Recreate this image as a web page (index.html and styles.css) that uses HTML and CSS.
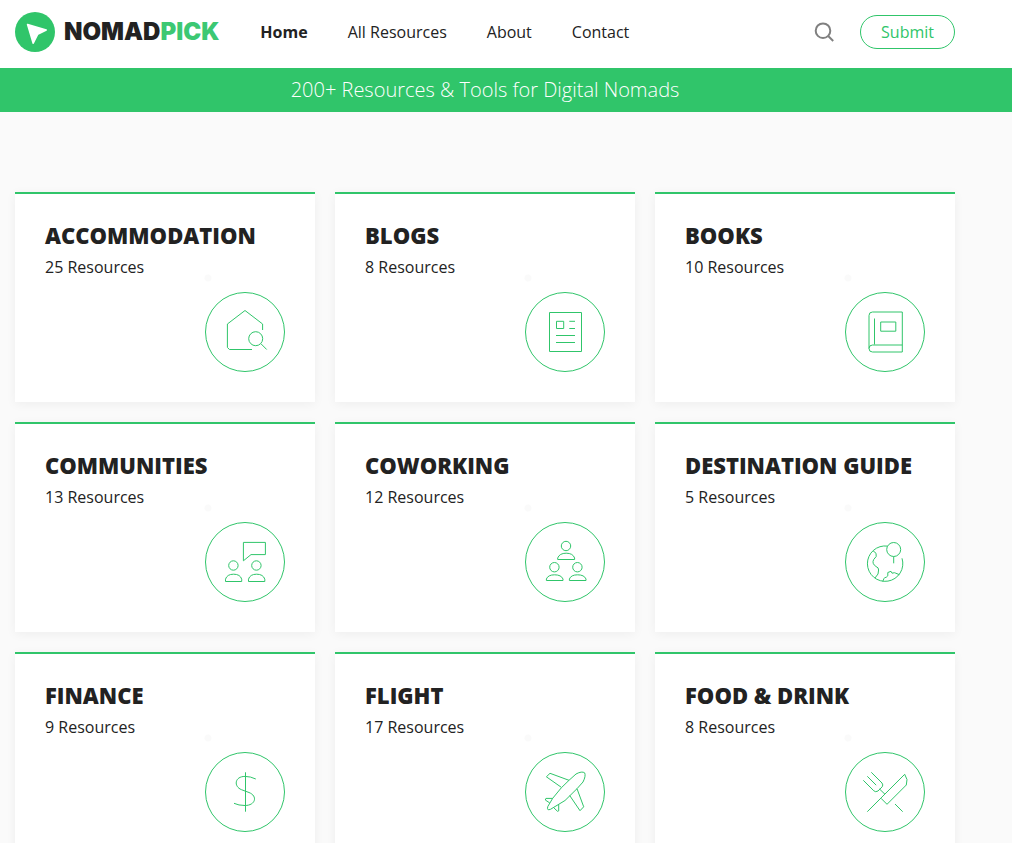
FILE: index.html
```html
<!DOCTYPE html>
<html lang="en">
<head>
<meta charset="utf-8">
<meta name="viewport" content="width=device-width, initial-scale=1">
<title>NomadPick</title>
<link rel="stylesheet" href="styles.css">
</head>
<body>
<header class="header">
  <div class="container header-row">
    <a class="logo" href="#">
      <svg class="logo-mark" viewBox="0 0 40 40" aria-hidden="true"><circle cx="20" cy="20" r="20" fill="#30c56a"/><path d="M12.6 12.6 31.2 18 22.6 22.4 18.2 31.2Z" fill="#fff" stroke="#fff" stroke-width="1.6" stroke-linejoin="round"/></svg>
      <span class="logo-text">NOMAD<span class="logo-accent">PICK</span></span>
    </a>
    <nav class="nav">
      <a class="nav-link nav-active" href="#">Home</a>
      <a class="nav-link" href="#">All Resources</a>
      <a class="nav-link" href="#">About</a>
      <a class="nav-link" href="#">Contact</a>
    </nav>
    <button class="search" type="button" aria-label="Search">
      <svg class="search-icon" viewBox="0 0 20 20" aria-hidden="true"><circle cx="9" cy="8.7" r="7.3"/><path d="M14.2 14l5 5"/></svg>
    </button>
    <a class="submit" href="#">Submit</a>
  </div>
</header>
<div class="banner"><h1 class="container banner-text">200+ Resources &amp; Tools for Digital Nomads</h1></div>
<main class="container cards">
  <a class="card" href="#">
    <h2 class="card-title">ACCOMMODATION</h2><p class="card-count">25 Resources</p>
    <svg class="icon" viewBox="0 0 80 80" aria-hidden="true"><circle cx="40" cy="40" r="39.5"/><path d="M47 57.5H24.5L22.4 55.5V32L40 18.5 57.6 32V38M56 51.8l5.7 5.7"/><circle cx="50.7" cy="46.7" r="7"/></svg>
  </a>
  <a class="card" href="#">
    <h2 class="card-title">BLOGS</h2><p class="card-count">8 Resources</p>
    <svg class="icon" viewBox="0 0 80 80" aria-hidden="true"><circle cx="40" cy="40" r="39.5"/><path d="M24.5 20.5h32v39h-32zM31.5 29.3h7.2v7.2h-7.2zM44.3 29.3H50M44.3 36.5H50M31 43.5H50M31 50.5H50"/></svg>
  </a>
  <a class="card" href="#">
    <h2 class="card-title">BOOKS</h2><p class="card-count">10 Resources</p>
    <svg class="icon" viewBox="0 0 80 80" aria-hidden="true"><circle cx="40" cy="40" r="39.5"/><path d="M24 56.5V23.5Q24 20 27.5 20H57.3V60H27.5Q24 60 24 56.5 24 53 27.5 53H57.3M29.5 26.5V52.5M35.7 30H50.8V39.2H35.7z"/></svg>
  </a>
  <a class="card" href="#">
    <h2 class="card-title">COMMUNITIES</h2><p class="card-count">13 Resources</p>
    <svg class="icon" viewBox="0 0 80 80" aria-hidden="true"><circle cx="40" cy="40" r="39.5"/><path d="M38.4 20.4H60.4V32.6H46L38.4 38.8zM20.5 59.5V57.2Q22 52.2 28.6 52.2T36.7 57.2V59.5zM43.5 59.5V57.2Q45 52.2 51.6 52.2T59.8 57.2V59.5z"/><circle cx="28.4" cy="43.5" r="4.7"/><circle cx="51.4" cy="43.5" r="4.7"/></svg>
  </a>
  <a class="card" href="#">
    <h2 class="card-title">COWORKING</h2><p class="card-count">12 Resources</p>
    <svg class="icon" viewBox="0 0 80 80" aria-hidden="true"><circle cx="40" cy="40" r="39.5"/><path d="M32.7 37.5V36Q34.5 31.2 41.2 31.2T49.6 36V37.5zM21.4 58.5V57Q23 52.8 29.6 52.8T38 57V58.5zM44.4 58.5V57Q46 52.8 52.6 52.8T61 57V58.5z"/><circle cx="41" cy="24" r="4.7"/><circle cx="29.4" cy="45.2" r="4.7"/><circle cx="52.4" cy="45.2" r="4.7"/></svg>
  </a>
  <a class="card" href="#">
    <h2 class="card-title">DESTINATION GUIDE</h2><p class="card-count">5 Resources</p>
    <svg class="icon" viewBox="0 0 80 80" aria-hidden="true"><circle cx="40" cy="40" r="39.5"/><path d="M42.5 24.1A17.7 17.7 0 1 0 57 36.3M48.7 34.5V41.3M28 28.7Q32.5 31 31.2 34.5L28.7 37.5Q26.5 41.5 31 44.5 33.8 45.5 33.6 48L33 52 30 56M37.7 59.5L39 56.5Q39.2 55.5 41.2 55.3L42.8 53.8V50.5L46 49.3 47 51.2Q50 50.2 50.8 51.2L54.4 52.7"/><circle cx="48.7" cy="27.5" r="7"/></svg>
  </a>
  <a class="card" href="#">
    <h2 class="card-title">FINANCE</h2><p class="card-count">9 Resources</p>
    <svg class="icon" viewBox="0 0 80 80" aria-hidden="true"><circle cx="40" cy="40" r="39.5"/><path d="M40.5 20.3V59.7M50.8 27Q45.5 24.4 40 24.4C29.5 24.4 28.5 34.5 36.5 37.7L44 40.5C53 44 50.5 53.5 40 53.5Q33.5 53.5 29 51.3"/></svg>
  </a>
  <a class="card" href="#">
    <h2 class="card-title">FLIGHT</h2><p class="card-count">17 Resources</p>
    <svg class="icon" viewBox="0 0 80 80" aria-hidden="true"><circle cx="40" cy="40" r="39.5"/><path d="M44 28.3L51 22Q57 18.8 59.7 20.9 61 24 58 30L52 36.7 40 48.5 25.5 57.3Q21.5 59 22.8 54.5L27.7 46.3 36.3 35.8zM44 28.3L25 21.3 21.4 24.8 36.3 35.3M52 36.7L58.7 54.8 55 58.7 44.7 43.5M27.7 46.4H20.9L20.3 48 24.7 50.9M33.7 52.3V58.9L32.5 59.3 28.5 55.5"/></svg>
  </a>
  <a class="card" href="#">
    <h2 class="card-title">FOOD &amp; DRINK</h2><p class="card-count">8 Resources</p>
    <svg class="icon" viewBox="0 0 80 80" aria-hidden="true"><circle cx="40" cy="40" r="39.5"/><path d="M26.3 20.3L37 31Q38.5 33 37.2 34.8L33 39Q30.5 40.5 28.8 38.8L18.3 28.3M22.3 24.3L31.2 33.2M34.5 37L40 42.3M22.3 59.7L59.7 22.3Q63.5 27.5 61.3 33L42 52.3 36 46.3M50 52L57.7 59.7"/></svg>
  </a>
</main>
</body>
</html>
```
FILE: styles.css
```css
* { box-sizing: border-box; }
body {
  margin: 0;
  height: 100vh;
  overflow: hidden;
  background: #fafafa;
  color: #222;
  font: 16px/24px "Open Sans", sans-serif;
}
a { color: inherit; text-decoration: none; }
h1, h2, p { margin: 0; }
.container { max-width: 970px; padding: 0 15px; }
.header { background: #fff; }
.header-row { display: flex; align-items: center; height: 68px; padding-bottom: 4px; }
.logo { display: flex; align-items: center; gap: 9px; margin-right: 41px; }
.logo-mark { width: 40px; height: 40px; }
.logo-text { font: 900 24px/40px Inter, sans-serif; }
.logo-accent { color: #3cc873; }
.nav { display: flex; gap: 40px; }
.nav-active { font-weight: 700; }
.search { display: flex; margin-left: auto; margin-right: 26px; padding: 0; border: 0; background: none; }
.search-icon { width: 20px; height: 20px; fill: none; stroke: #808080; stroke-width: 2; }
.submit {
  padding: 4px 20px;
  border: 1px solid #30c56a;
  border-radius: 17px;
  color: #30c56a;
}
.banner { background: #30c56a; color: #fff; }
.banner-text { font-size: 20px; line-height: 44px; font-weight: 300; text-align: center; }
.cards { display: grid; grid-template-columns: repeat(3, 1fr); gap: 20px; padding-top: 80px; }
.card {
  display: flex;
  flex-direction: column;
  height: 210px;
  padding: 27px 30px 30px;
  border-top: 2px solid #30c56a;
  background: radial-gradient(circle at 193px 84px, #fafafa 3px, transparent 4px) #fff;
  box-shadow: 0 2px 10px rgba(0, 0, 0, 0.05);
}
.card-title { font-size: 22px; line-height: 28px; font-weight: 800; white-space: nowrap; }
.card-count { margin-top: 6px; }
.icon {
  width: 80px;
  height: 80px;
  margin-top: auto;
  align-self: flex-end;
  fill: none;
  stroke: #30c56a;
  stroke-width: 1;
}
```
